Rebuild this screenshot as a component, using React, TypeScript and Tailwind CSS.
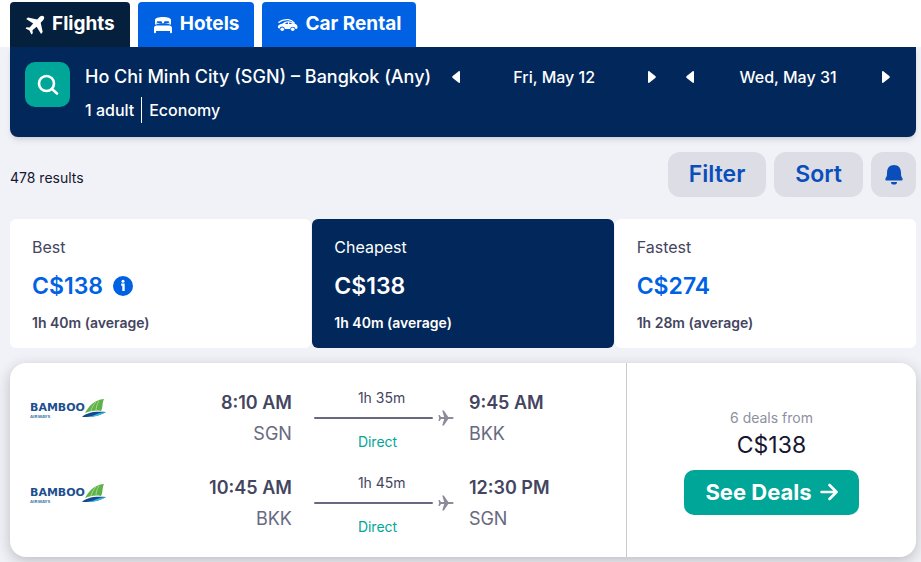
import type { ReactNode } from 'react';

interface IconProps {
  className?: string;
}

interface Airport {
  time: string;
  code: string;
}

interface LegProps {
  from: Airport;
  to: Airport;
  duration: string;
}

interface PriceTabProps {
  label: string;
  price: string;
  average: string;
  selected?: boolean;
  info?: boolean;
}

function FlightIcon({ className }: IconProps) {
  return (
    <svg viewBox="0 0 20 20" fill="currentColor" className={className} aria-hidden="true">
      <path d="M18.600 1.200c-1-.9-2.600-.6-3.600.4L12.200 4.500 3 2.500 1.200 4l7 4.600-3.600 4-3-.4L.600 13.600l3.900 1.900 1.900 3.900 1.400-1.200-.3-2.900 4.100-3.500 4.500 7.100 1.600-1.900-2-9.200 2.600-2.900c1-1 1.300-2.700.3-3.700Z" />
    </svg>
  );
}

function HotelIcon({ className }: IconProps) {
  return (
    <svg viewBox="0 0 20 18" fill="currentColor" className={className} aria-hidden="true">
      <path
        fillRule="evenodd"
        d="M2 4c0-2 3.500-3 8-3s8 1 8 3v4.500h-1.800V6.500c0-.8-.6-1.300-1.400-1.300h-2.400c-.8 0-1.400.5-1.400 1.300v.8H9v-.8c0-.8-.6-1.300-1.400-1.300H5.200c-.8 0-1.400.5-1.400 1.300v2H2V4Z"
      />
      <path d="M4 6.800c4 1.200 8 1.200 12 0v1H4v-1Z" />
      <path d="M3.500 9.500h13c1.400 0 2.500 1.100 2.500 2.500v4.200a1 1 0 0 1-2 0V15H3v1.200a1 1 0 0 1-2 0V12c0-1.400 1.100-2.500 2.500-2.500Z" />
    </svg>
  );
}

function CarIcon({ className }: IconProps) {
  return (
    <svg viewBox="0 0 22 14" fill="currentColor" className={className} aria-hidden="true">
      <path d="M2 4.200C5 1.600 8.500 1 12 1.400c2.600.3 4.600 1.600 6.200 3.600" fill="none" stroke="currentColor" strokeWidth="1.400" strokeLinecap="round" />
      <path
        fillRule="evenodd"
        d="M1 8.200C1.600 6.600 3.600 6 5.500 5.600 7 3.900 9 3 12 3c2.600 0 4.300 1 5.700 2.400 2.600.7 3.800 1.700 3.800 3.800 0 1.200-.4 2-1.500 2h-.6a2.900 2.900 0 0 0-5.700 0H8.300a2.900 2.900 0 0 0-5.700-.4C1.300 10.500.700 9.300 1 8.200ZM8.200 6h3.300V4.400C10 4.400 8.900 5 8.200 6Zm4.600 0H16c-.9-.9-1.900-1.400-3.200-1.600V6Z"
      />
      <circle cx="5.500" cy="11.400" r="1.900" />
      <circle cx="16.500" cy="11.400" r="1.900" />
    </svg>
  );
}

function SearchIcon({ className }: IconProps) {
  return (
    <svg
      viewBox="0 0 22 22"
      fill="none"
      stroke="currentColor"
      strokeWidth="2.600"
      strokeLinecap="round"
      className={className}
      aria-hidden="true"
    >
      <circle cx="9.500" cy="9.500" r="7.500" />
      <path d="m15 15 5 4.500" />
    </svg>
  );
}

function BellIcon({ className }: IconProps) {
  return (
    <svg viewBox="0 0 18 20" fill="currentColor" className={className} aria-hidden="true">
      <path d="M9 0C5 0 2.300 2.800 2.100 6.500L1.900 10c-.1 1.300-.5 2-1.200 3-.5.800-.5 2.500.5 2.500h15.600c1 0 1-1.700.5-2.500-.7-1-1.100-1.700-1.200-3l-.2-3.500C15.700 2.800 13 0 9 0Z" />
      <path d="M6 17h6a3 2.600 0 0 1-6 0Z" />
    </svg>
  );
}

function ArrowIcon({ className }: IconProps) {
  return (
    <svg viewBox="0 0 8 12" fill="currentColor" className={className} aria-hidden="true">
      <path d="M8 1v10c0 1-.9 1.300-1.600.6L.7 7C0 6.400 0 5.600.700 5L6.400.4C7.100-.3 8 0 8 1Z" />
    </svg>
  );
}

function InfoIcon({ className }: IconProps) {
  return (
    <svg viewBox="0 0 20 20" className={className} aria-hidden="true">
      <circle cx="10" cy="10" r="10" fill="currentColor" />
      <circle cx="10" cy="5.300" r="1.500" fill="white" />
      <path d="M8.200 8.600h2.300V15" fill="none" stroke="white" strokeWidth="2.400" />
    </svg>
  );
}

function PlaneIcon({ className }: IconProps) {
  return (
    <svg viewBox="0 0 16 16" fill="currentColor" className={className} aria-hidden="true">
      <path d="M15.600 8c0-.8-.9-1.100-1.800-1.100h-3.500L5.800.5H4.200l2 6.400H3L1.600 5H.4L1.200 8l-.8 3h1.200L3 9.100h3.200l-2 6.400h1.600l4.500-6.400h3.500c.9 0 1.800-.3 1.800-1.100Z" />
    </svg>
  );
}

function BambooLogo() {
  return (
    <svg viewBox="0 0 76 20" className="h-5 w-[76px] shrink-0" role="img" aria-label="Bamboo Airways">
      <text x="0" y="12" fill="#1d4f8f" className="font-['DejaVu_Sans'] text-[11px] font-bold">
        BAMBOO
      </text>
      <text x="0" y="19" fill="#3f7fae" className="font-['DejaVu_Sans'] text-[4px] font-bold">
        AIRWAYS
      </text>
      <path d="M55 14C59 7 64 1 74 0c-2 4-1 9-3 12-6-1-11 0-16 2Z" fill="#5fb24a" />
      <path d="M61 12c1-4 3-7 5-9M66 12c0-4 1-7 3-10" fill="none" stroke="#a9d98f" />
      <path d="M52 18c4-4 11-6 24-5-5 3-12 5-24 5Z" fill="#124a8b" />
      <path d="M58 18c7 0 13-2 18-5-6 0-10 3-18 5Z" fill="#36b4e5" />
    </svg>
  );
}

function ProductTab({ icon, label, active = false }: { icon: ReactNode; label: string; active?: boolean }) {
  return (
    <a
      href="#"
      aria-current={active ? 'page' : undefined}
      className={`flex h-[45px] items-center gap-[7px] rounded-t px-[15px] text-[19px] font-bold text-white ${
        active ? 'bg-[#05203c]' : 'bg-[#0062e3]'
      }`}
    >
      {icon}
      {label}
    </a>
  );
}

function DateStepper({ date }: { date: string }) {
  return (
    <div className="flex h-[30px] flex-1 items-center justify-between text-base font-medium">
      <button aria-label={`Day before ${date}`}>
        <ArrowIcon className="h-3 w-2" />
      </button>
      <span>{date}</span>
      <button aria-label={`Day after ${date}`}>
        <ArrowIcon className="h-3 w-2 rotate-180" />
      </button>
    </div>
  );
}

function PriceTab({ label, price, average, selected = false, info = false }: PriceTabProps) {
  return (
    <button
      aria-pressed={selected}
      className={`rounded-md px-[22px] pt-4 pb-[15px] text-left ${
        selected ? 'bg-[#02275a] text-white' : 'bg-white text-[#444560]'
      }`}
    >
      <span className="block text-base leading-6">{label}</span>
      <span
        className={`my-3 flex items-center gap-[10px] text-[23px] leading-[30px] font-semibold ${
          selected ? 'text-white' : 'text-[#0062e3]'
        }`}
      >
        {price}
        {info && <InfoIcon className="size-5" />}
      </span>
      <span className="block text-sm leading-5 font-semibold">{average}</span>
    </button>
  );
}

function Leg({ from, to, duration }: LegProps) {
  return (
    <div className="grid grid-cols-[5fr_177px_3fr] text-[#444560]">
      <div className="flex justify-between">
        <div className="pt-3">
          <BambooLogo />
        </div>
        <div className="text-right text-lg leading-[31px]">
          <div className="font-semibold">{from.time}</div>
          <div className="text-[#68697f]">{from.code}</div>
        </div>
      </div>
      <div className="pr-[15px] pl-[22px] text-sm leading-[22px]">
        <div className="pl-11">{duration}</div>
        <div className="flex h-[18px] items-center gap-[5px]">
          <div className="h-[2px] flex-1 rounded bg-[#68697f]" />
          <PlaneIcon className="size-4 text-[#8d8a99]" />
        </div>
        <div className="pt-1 pl-11 text-[#00a698]">Direct</div>
      </div>
      <div className="text-lg leading-[31px]">
        <div className="font-semibold">{to.time}</div>
        <div className="text-[#68697f]">{to.code}</div>
      </div>
    </div>
  );
}

export default function App() {
  return (
    <div className="min-h-screen bg-[#f1f2f8] font-[Inter,sans-serif] text-[#161630]">
      <nav className="flex gap-2 bg-white pt-[2px] pl-[10px]">
        <ProductTab icon={<FlightIcon className="size-5" />} label="Flights" active />
        <ProductTab icon={<HotelIcon className="h-[18px] w-5" />} label="Hotels" />
        <ProductTab icon={<CarIcon className="h-[14px] w-[21px]" />} label="Car Rental" />
      </nav>

      <main className="pr-[5px] pb-[5px] pl-[10px]">
        <header className="flex h-[90px] items-start gap-[15px] rounded-b-lg bg-[#02275a] py-[15px] pr-[26px] pl-[15px] text-white shadow-md">
          <button
            aria-label="Edit search"
            className="flex size-[45px] shrink-0 items-center justify-center rounded-[10px] bg-[#00a698]"
          >
            <SearchIcon className="size-[22px]" />
          </button>
          <div className="flex-none">
            <div className="text-lg leading-[30px] font-medium">Ho Chi Minh City (SGN) – Bangkok (Any)</div>
            <div className="mt-[5px] flex items-center text-base leading-[26px] font-medium">
              <span className="border-r border-white pr-[7px]">1 adult</span>
              <span className="pl-[7px]">Economy</span>
            </div>
          </div>
          <div className="flex flex-1 gap-[30px] pl-[6px]">
            <DateStepper date="Fri, May 12" />
            <DateStepper date="Wed, May 31" />
          </div>
        </header>

        <div className="flex items-center gap-2 pt-[15px] pb-[22px]">
          <p className="flex-1 pt-[6px] text-sm">478 results</p>
          <button className="h-[45px] rounded-xl bg-[#dddde5] px-[21px] text-[23px] font-semibold text-[#0a4ebb]">
            Filter
          </button>
          <button className="h-[45px] rounded-xl bg-[#dddde5] px-[21px] text-[23px] font-semibold text-[#0a4ebb]">
            Sort
          </button>
          <button
            aria-label="Price alerts"
            className="flex size-[45px] items-center justify-center rounded-xl bg-[#dddde5] text-[#0a4ebb]"
          >
            <BellIcon className="h-5 w-[18px]" />
          </button>
        </div>

        <div className="grid grid-cols-3 gap-px">
          <PriceTab label="Best" price="C$138" average="1h 40m (average)" info />
          <PriceTab label="Cheapest" price="C$138" average="1h 40m (average)" selected />
          <PriceTab label="Fastest" price="C$274" average="1h 28m (average)" />
        </div>

        <article className="mt-[15px] flex rounded-2xl bg-white shadow-[0_4px_14px_rgba(37,32,31,0.25)]">
          <div className="flex flex-1 flex-col gap-[19px] pt-6 pb-[19px] pl-5">
            <Leg from={{ time: '8:10 AM', code: 'SGN' }} to={{ time: '9:45 AM', code: 'BKK' }} duration="1h 35m" />
            <Leg from={{ time: '10:45 AM', code: 'BKK' }} to={{ time: '12:30 PM', code: 'SGN' }} duration="1h 45m" />
          </div>
          <div className="flex w-[290px] flex-col items-center justify-center border-l border-[#c9c9d2]">
            <p className="text-sm leading-6 text-[#8f90a0]">6 deals from</p>
            <p className="text-[23px] leading-[30px]">C$138</p>
            <button className="mt-[10px] flex h-[45px] items-center gap-2 rounded-[10px] bg-[#00a698] px-[21px] text-[22px] font-bold text-white">
              See Deals
              <svg
                viewBox="0 0 18 18"
                fill="none"
                stroke="currentColor"
                strokeWidth="2.600"
                strokeLinecap="round"
                strokeLinejoin="round"
                className="size-[18px]"
                aria-hidden="true"
              >
                <path d="M1.500 9h15M9.500 2l7 7-7 7" />
              </svg>
            </button>
          </div>
        </article>
      </main>
    </div>
  );
}
